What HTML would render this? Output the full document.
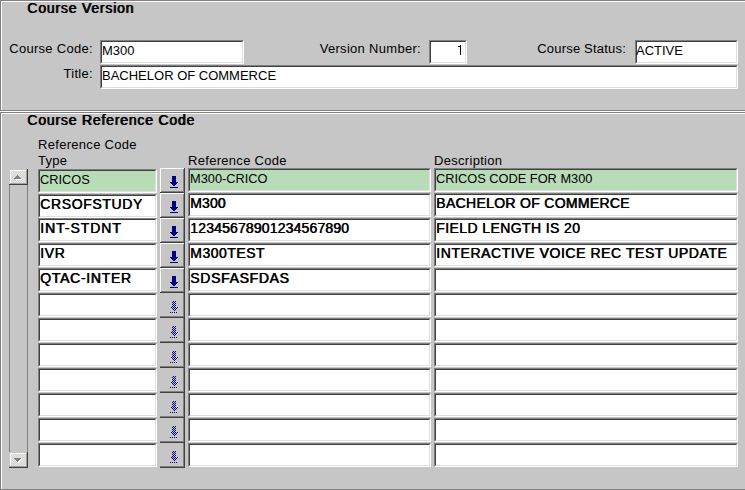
<!DOCTYPE html>
<html><head><meta charset="utf-8">
<style>
html,body{margin:0;padding:0}
body{width:745px;height:490px;overflow:hidden;position:relative;background:#c6c6c6;font-family:"Liberation Sans",sans-serif;font-size:13px;color:#000}
.hl{position:absolute;left:0;width:745px;height:1px}
.vl{position:absolute;width:1px}
.lbl,.ttl,.ft{position:absolute;white-space:nowrap;line-height:0;height:0}
.lbl span,.ft span{}
.ttl{font-size:14px;letter-spacing:0.8px;text-shadow:0.8px 0 0 #000}
.lbl{letter-spacing:0.3px}
.reg{font-size:12.8px;letter-spacing:0}
.fld{position:absolute;box-sizing:border-box;border-top:1px solid #808080;border-left:1px solid #808080;border-bottom:1px solid #fff;border-right:1px solid #fff}
.fin{position:absolute;left:0;top:0;right:0;bottom:0;border-top:1px solid #404040;border-left:1px solid #404040;border-bottom:1px solid #dfdfdf;border-right:1px solid #dfdfdf}
.fld .ft{position:absolute}
.bld{font-size:14px;text-shadow:0.6px 0 0 #000}
.btn{position:absolute;left:160px;width:25px;height:25px;box-sizing:border-box}
.btn.en{box-shadow:inset -1px -1px 0 #404040, inset 1px 1px 0 #fff, inset -2px -2px 0 #808080}
.btn.dis{box-shadow:inset -1px -1px 0 #404040, inset -2px -2px 0 #808080}
.sb{position:absolute;left:9px;width:19px;height:16px}
</style></head><body>
<svg width="0" height="0" style="position:absolute">
<defs>
<pattern id="chk" width="2" height="2" patternUnits="userSpaceOnUse"><rect x="1" y="0" width="1" height="1" fill="#000080"/><rect x="0" y="1" width="1" height="1" fill="#000080"/></pattern>
<pattern id="dith" width="2" height="2" patternUnits="userSpaceOnUse"><rect width="2" height="2" fill="#d4d4d0"/><rect x="0" y="0" width="1" height="1" fill="#e6e6e2"/><rect x="1" y="1" width="1" height="1" fill="#e6e6e2"/></pattern>
<g id="arr" fill="#000080" shape-rendering="crispEdges">
<rect x="12" y="8" width="4" height="6"/>
<rect x="10" y="14" width="8" height="1"/><rect x="11" y="15" width="6" height="1"/><rect x="12" y="16" width="4" height="1"/><rect x="13" y="17" width="2" height="1"/>
<rect x="10" y="19" width="8" height="1"/>
</g>
<g id="arrd" fill="url(#chk)" shape-rendering="crispEdges">
<rect x="12" y="8" width="4" height="6"/>
<rect x="10" y="14" width="8" height="1"/><rect x="11" y="15" width="6" height="1"/><rect x="12" y="16" width="4" height="1"/><rect x="13" y="17" width="2" height="1"/>
<rect x="10" y="19" width="8" height="1"/>
</g>
<g id="up" shape-rendering="crispEdges">
<rect x="0" y="0" width="19" height="16" fill="#404040"/>
<rect x="1" y="1" width="17" height="15" fill="url(#dith)"/>
<rect x="1" y="1" width="17" height="1" fill="#fff"/><rect x="1" y="1" width="1" height="14" fill="#fff"/>
<rect x="1" y="14" width="17" height="1" fill="#a0a0a0"/><rect x="17" y="1" width="1" height="14" fill="#a0a0a0"/><rect x="0" y="15" width="19" height="1" fill="#404040"/><rect x="18" y="0" width="1" height="16" fill="#404040"/>
<rect x="0" y="0" width="18" height="1" fill="#c6c6c6"/><rect x="0" y="0" width="1" height="15" fill="#c6c6c6"/>
<g transform="translate(1,1)" fill="#fff"><rect x="8" y="6" width="1" height="1"/><rect x="7" y="7" width="3" height="1"/><rect x="6" y="8" width="5" height="1"/><rect x="5" y="9" width="7" height="1"/></g>
<g fill="#808080"><rect x="8" y="6" width="1" height="1"/><rect x="7" y="7" width="3" height="1"/><rect x="6" y="8" width="5" height="1"/><rect x="5" y="9" width="7" height="1"/></g>
</g>
<g id="dn" shape-rendering="crispEdges">
<rect x="0" y="0" width="19" height="16" fill="#404040"/>
<rect x="1" y="1" width="17" height="14" fill="url(#dith)"/>
<rect x="1" y="1" width="17" height="1" fill="#fff"/><rect x="1" y="1" width="1" height="14" fill="#fff"/>
<rect x="1" y="14" width="17" height="1" fill="#a0a0a0"/><rect x="17" y="1" width="1" height="14" fill="#a0a0a0"/><rect x="0" y="15" width="19" height="1" fill="#404040"/><rect x="18" y="0" width="1" height="16" fill="#404040"/>
<rect x="0" y="0" width="18" height="1" fill="#c6c6c6"/><rect x="0" y="0" width="1" height="15" fill="#c6c6c6"/>
<g transform="translate(1,1)" fill="#fff"><rect x="5" y="6" width="7" height="1"/><rect x="6" y="7" width="5" height="1"/><rect x="7" y="8" width="3" height="1"/><rect x="8" y="9" width="1" height="1"/></g>
<g fill="#808080"><rect x="5" y="6" width="7" height="1"/><rect x="6" y="7" width="5" height="1"/><rect x="7" y="8" width="3" height="1"/><rect x="8" y="9" width="1" height="1"/></g>
</g>
</defs></svg>
<div class="hl" style="top:0;background:#808080"></div><div class="hl" style="top:1px;left:1px;background:#fff"></div>
<div class="vl" style="left:0;top:0;height:111px;background:#808080"></div><div class="vl" style="left:1px;top:1px;height:110px;background:#fff"></div>
<div class="hl" style="top:110px;background:#808080"></div><div class="hl" style="top:111px;background:#fff"></div>
<div class="hl" style="top:112px;background:#808080"></div><div class="hl" style="top:113px;left:1px;background:#fff"></div>
<div class="vl" style="left:0;top:112px;height:378px;background:#808080"></div><div class="vl" style="left:1px;top:113px;height:377px;background:#fff"></div>
<span class="ttl" style="left:27px;top:8px">Course Version</span>
<span class="ttl" style="left:27px;top:120px">Course Reference Code</span>
<span class="lbl" style="right:652px;top:49px;">Course Code:</span>
<span class="lbl" style="right:324px;top:49px;">Version Number:</span>
<span class="lbl" style="right:119px;top:49px;letter-spacing:0.2px">Course Status:</span>
<span class="lbl" style="right:652px;top:74px;">Title:</span>
<div class="fld" style="left:100px;top:40px;width:144px;height:24px;"><div class="fin" style="background:#fff"></div></div>
<span class="ft " style="left:102px;top:51px;">M300</span>
<div class="fld" style="left:429px;top:40px;width:38px;height:24px;"><div class="fin" style="background:#fff"></div></div>
<div style="position:absolute;left:460px;top:45px;width:1px;height:10px;background:#000"></div><div style="position:absolute;left:458px;top:46px;width:2px;height:1px;background:#000"></div>
<div class="fld" style="left:635px;top:40px;width:103px;height:24px;"><div class="fin" style="background:#fff"></div></div>
<span class="ft " style="left:636px;top:51px;">ACTIVE</span>
<div class="fld" style="left:100px;top:65px;width:638px;height:24px;"><div class="fin" style="background:#fff"></div></div>
<span class="ft " style="left:102px;top:76px;">BACHELOR OF COMMERCE</span>
<span class="lbl" style="left:38px;top:145px">Reference Code</span>
<span class="lbl" style="left:38px;top:161px">Type</span>
<span class="lbl" style="left:188px;top:161px">Reference Code</span>
<span class="lbl" style="left:434px;top:161px">Description</span>
<div class="fld" style="left:38px;top:169px;width:119px;height:24px;"><div class="fin" style="background:#b8dcb8"></div></div>
<span class="ft reg" style="left:40px;top:180px;">CRICOS</span>
<div class="fld" style="left:188px;top:168px;width:243px;height:24px;"><div class="fin" style="background:#b8dcb8"></div></div>
<span class="ft reg" style="left:190px;top:179px;">M300-CRICO</span>
<div class="fld" style="left:434px;top:168px;width:304px;height:24px;"><div class="fin" style="background:#b8dcb8"></div></div>
<span class="ft reg" style="left:436px;top:179px;">CRICOS CODE FOR M300</span>
<div class="btn en" style="top:168px"><svg width="25" height="25" style="position:absolute;left:0;top:0"><use href="#arr"/></svg></div>
<div class="fld" style="left:38px;top:194px;width:119px;height:24px;"><div class="fin" style="background:#fff"></div></div>
<span class="ft bld" style="left:40px;top:204px;letter-spacing:0.62px">CRSOFSTUDY</span>
<div class="fld" style="left:188px;top:193px;width:243px;height:24px;"><div class="fin" style="background:#fff"></div></div>
<span class="ft bld" style="left:190px;top:203px;letter-spacing:0.1px">M300</span>
<div class="fld" style="left:434px;top:193px;width:304px;height:24px;"><div class="fin" style="background:#fff"></div></div>
<span class="ft bld" style="left:436px;top:203px;letter-spacing:0.31px">BACHELOR OF COMMERCE</span>
<div class="btn en" style="top:193px"><svg width="25" height="25" style="position:absolute;left:0;top:0"><use href="#arr"/></svg></div>
<div class="fld" style="left:38px;top:218px;width:119px;height:24px;"><div class="fin" style="background:#fff"></div></div>
<span class="ft bld" style="left:40px;top:228px;letter-spacing:0.94px">INT-STDNT</span>
<div class="fld" style="left:188px;top:218px;width:243px;height:24px;"><div class="fin" style="background:#fff"></div></div>
<span class="ft bld" style="left:190px;top:228px;letter-spacing:0.16px">12345678901234567890</span>
<div class="fld" style="left:434px;top:218px;width:304px;height:24px;"><div class="fin" style="background:#fff"></div></div>
<span class="ft bld" style="left:436px;top:228px;letter-spacing:0.4px">FIELD LENGTH IS 20</span>
<div class="btn en" style="top:218px"><svg width="25" height="25" style="position:absolute;left:0;top:0"><use href="#arr"/></svg></div>
<div class="fld" style="left:38px;top:243px;width:119px;height:24px;"><div class="fin" style="background:#fff"></div></div>
<span class="ft bld" style="left:40px;top:253px;letter-spacing:0.6px">IVR</span>
<div class="fld" style="left:188px;top:243px;width:243px;height:24px;"><div class="fin" style="background:#fff"></div></div>
<span class="ft bld" style="left:190px;top:253px;letter-spacing:0.5px">M300TEST</span>
<div class="fld" style="left:434px;top:243px;width:304px;height:24px;"><div class="fin" style="background:#fff"></div></div>
<span class="ft bld" style="left:436px;top:253px;letter-spacing:0.57px">INTERACTIVE VOICE REC TEST UPDATE</span>
<div class="btn en" style="top:243px"><svg width="25" height="25" style="position:absolute;left:0;top:0"><use href="#arr"/></svg></div>
<div class="fld" style="left:38px;top:268px;width:119px;height:24px;"><div class="fin" style="background:#fff"></div></div>
<span class="ft bld" style="left:40px;top:278px;letter-spacing:0.7px">QTAC-INTER</span>
<div class="fld" style="left:188px;top:268px;width:243px;height:24px;"><div class="fin" style="background:#fff"></div></div>
<span class="ft bld" style="left:190px;top:278px;letter-spacing:0.68px">SDSFASFDAS</span>
<div class="fld" style="left:434px;top:268px;width:304px;height:24px;"><div class="fin" style="background:#fff"></div></div>
<div class="btn en" style="top:268px"><svg width="25" height="25" style="position:absolute;left:0;top:0"><use href="#arr"/></svg></div>
<div class="fld" style="left:38px;top:293px;width:119px;height:24px;"><div class="fin" style="background:#fff"></div></div>
<div class="fld" style="left:188px;top:293px;width:243px;height:24px;"><div class="fin" style="background:#fff"></div></div>
<div class="fld" style="left:434px;top:293px;width:304px;height:24px;"><div class="fin" style="background:#fff"></div></div>
<div class="btn dis" style="top:293px"><svg width="25" height="25" style="position:absolute;left:0;top:0"><use href="#arrd"/></svg></div>
<div class="fld" style="left:38px;top:318px;width:119px;height:24px;"><div class="fin" style="background:#fff"></div></div>
<div class="fld" style="left:188px;top:318px;width:243px;height:24px;"><div class="fin" style="background:#fff"></div></div>
<div class="fld" style="left:434px;top:318px;width:304px;height:24px;"><div class="fin" style="background:#fff"></div></div>
<div class="btn dis" style="top:318px"><svg width="25" height="25" style="position:absolute;left:0;top:0"><use href="#arrd"/></svg></div>
<div class="fld" style="left:38px;top:343px;width:119px;height:24px;"><div class="fin" style="background:#fff"></div></div>
<div class="fld" style="left:188px;top:343px;width:243px;height:24px;"><div class="fin" style="background:#fff"></div></div>
<div class="fld" style="left:434px;top:343px;width:304px;height:24px;"><div class="fin" style="background:#fff"></div></div>
<div class="btn dis" style="top:343px"><svg width="25" height="25" style="position:absolute;left:0;top:0"><use href="#arrd"/></svg></div>
<div class="fld" style="left:38px;top:368px;width:119px;height:24px;"><div class="fin" style="background:#fff"></div></div>
<div class="fld" style="left:188px;top:368px;width:243px;height:24px;"><div class="fin" style="background:#fff"></div></div>
<div class="fld" style="left:434px;top:368px;width:304px;height:24px;"><div class="fin" style="background:#fff"></div></div>
<div class="btn dis" style="top:368px"><svg width="25" height="25" style="position:absolute;left:0;top:0"><use href="#arrd"/></svg></div>
<div class="fld" style="left:38px;top:393px;width:119px;height:24px;"><div class="fin" style="background:#fff"></div></div>
<div class="fld" style="left:188px;top:393px;width:243px;height:24px;"><div class="fin" style="background:#fff"></div></div>
<div class="fld" style="left:434px;top:393px;width:304px;height:24px;"><div class="fin" style="background:#fff"></div></div>
<div class="btn dis" style="top:393px"><svg width="25" height="25" style="position:absolute;left:0;top:0"><use href="#arrd"/></svg></div>
<div class="fld" style="left:38px;top:418px;width:119px;height:24px;"><div class="fin" style="background:#fff"></div></div>
<div class="fld" style="left:188px;top:418px;width:243px;height:24px;"><div class="fin" style="background:#fff"></div></div>
<div class="fld" style="left:434px;top:418px;width:304px;height:24px;"><div class="fin" style="background:#fff"></div></div>
<div class="btn dis" style="top:418px"><svg width="25" height="25" style="position:absolute;left:0;top:0"><use href="#arrd"/></svg></div>
<div class="fld" style="left:38px;top:443px;width:119px;height:24px;"><div class="fin" style="background:#fff"></div></div>
<div class="fld" style="left:188px;top:443px;width:243px;height:24px;"><div class="fin" style="background:#fff"></div></div>
<div class="fld" style="left:434px;top:443px;width:304px;height:24px;"><div class="fin" style="background:#fff"></div></div>
<div class="btn dis" style="top:443px"><svg width="25" height="25" style="position:absolute;left:0;top:0"><use href="#arrd"/></svg></div>
<div class="hl" style="top:489px;background:#808080"></div>
<div class="vl" style="left:9px;top:185px;height:267px;background:#808080"></div>
<div class="vl" style="left:27px;top:185px;height:267px;background:#808080"></div>
<div class="sb" style="top:169px"><svg width="19" height="16" style="position:absolute;left:0;top:0"><use href="#up"/></svg></div>
<div class="sb" style="top:452px"><svg width="19" height="16" style="position:absolute;left:0;top:0"><use href="#dn"/></svg></div>
</body></html>
